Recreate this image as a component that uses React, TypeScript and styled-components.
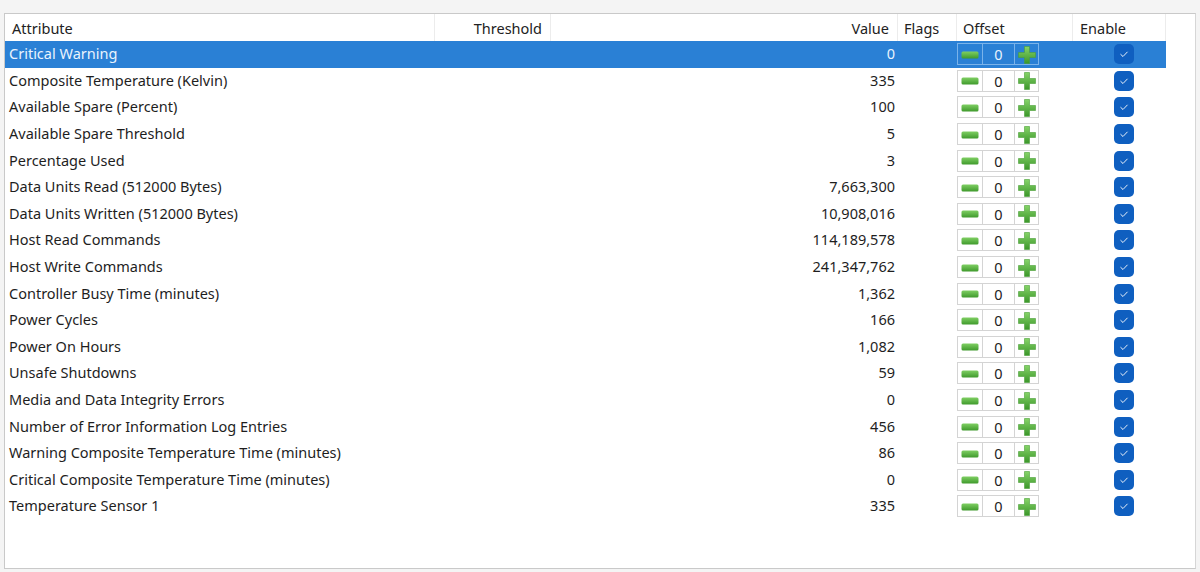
import { createGlobalStyle } from "styled-components";
import styled from "styled-components";

const rows: [string, string][] = [
  ["Critical Warning", "0"],
  ["Composite Temperature (Kelvin)", "335"],
  ["Available Spare (Percent)", "100"],
  ["Available Spare Threshold", "5"],
  ["Percentage Used", "3"],
  ["Data Units Read (512000 Bytes)", "7,663,300"],
  ["Data Units Written (512000 Bytes)", "10,908,016"],
  ["Host Read Commands", "114,189,578"],
  ["Host Write Commands", "241,347,762"],
  ["Controller Busy Time (minutes)", "1,362"],
  ["Power Cycles", "166"],
  ["Power On Hours", "1,082"],
  ["Unsafe Shutdowns", "59"],
  ["Media and Data Integrity Errors", "0"],
  ["Number of Error Information Log Entries", "456"],
  ["Warning Composite Temperature Time (minutes)", "86"],
  ["Critical Composite Temperature Time (minutes)", "0"],
  ["Temperature Sensor 1", "335"],
];

const GlobalStyle = createGlobalStyle`
  html, body {
    margin: 0;
    padding: 0;
    background: #f4f4f4;
    font-family: "Segoe UI", "Noto Sans", "Open Sans", sans-serif;
  }
`;

const Page = styled.div`
  padding: 13px 4px 3px 4px;
  height: 572px;
  box-sizing: border-box;
`;

const Panel = styled.div`
  height: 100%;
  box-sizing: border-box;
  background: #ffffff;
  border: 1px solid #c9c9c9;
  border-right-color: #d6d6d6;
`;

const Grid = styled.div`
  display: grid;
  grid-template-columns: 430px 116px 347px 59px 116px 93px;
  grid-template-rows: 27px;
  grid-auto-rows: 26.6px;
  width: 1161px;
  color: #1e1e1e;
  font-size: 14.5px;
`;

const HeadCell = styled.div<{ $align?: "left" | "right"; $pad?: number }>`
  display: flex;
  align-items: center;
  justify-content: ${({ $align }) => ($align === "right" ? "flex-end" : "flex-start")};
  padding: 0 ${({ $align, $pad }) => ($align === "right" ? `${$pad ?? 8}px` : "0")} 0
    ${({ $align, $pad }) => ($align === "right" ? "0" : `${$pad ?? 7}px`)};
  border-right: 1px solid #ececec;
  box-sizing: border-box;
  color: #222;
  white-space: nowrap;
`;

const Row = styled.div<{ $selected?: boolean }>`
  display: contents;
  color: ${({ $selected }) => ($selected ? "#e9f3fd" : "#1e1e1e")};

  & > div {
    background: ${({ $selected }) => ($selected ? "#2a80d5" : "transparent")};
  }
`;

const Cell = styled.div<{ $align?: "left" | "right" }>`
  display: flex;
  align-items: center;
  justify-content: ${({ $align }) => ($align === "right" ? "flex-end" : "flex-start")};
  padding: ${({ $align }) => ($align === "right" ? "0 3px 2px 0" : "0 0 2px 4px")};
  box-sizing: border-box;
  white-space: nowrap;
`;

const OffsetCell = styled.div`
  display: flex;
  align-items: center;
  padding-left: 0;
`;

const Spinner = styled.div<{ $selected?: boolean }>`
  display: grid;
  grid-template-columns: 24px 32px 24px;
  height: 22px;
  border: 1px solid ${({ $selected }) => ($selected ? "#7ab3ea" : "#d4d4d4")};
  box-sizing: border-box;

  & > * + * {
    border-left: 1px solid ${({ $selected }) => ($selected ? "#7ab3ea" : "#d4d4d4")};
  }
`;

const SpinBtn = styled.div`
  display: flex;
  align-items: center;
  justify-content: center;
`;

const SpinValue = styled.div<{ $selected?: boolean }>`
  display: flex;
  align-items: center;
  justify-content: center;
  padding-bottom: 1px;
  font-size: 14.5px;
  color: ${({ $selected }) => ($selected ? "#e9f3fd" : "#222")};
`;

const EnableCell = styled.div`
  display: flex;
  align-items: center;
  padding-left: 41px;
`;

const Check = styled.div`
  width: 20px;
  height: 20px;
  border-radius: 5px;
  background: #0f5fc0;
  display: flex;
  align-items: center;
  justify-content: center;
`;

function Minus() {
  return (
    <svg width="18" height="8" viewBox="0 0 18 8">
      <defs>
        <linearGradient id="mg" x1="0" y1="0" x2="0" y2="1">
          <stop offset="0" stopColor="#7fcf63" />
          <stop offset="1" stopColor="#3f9a2c" />
        </linearGradient>
      </defs>
      <rect x="0.5" y="0.5" width="17" height="7" rx="1.5" fill="url(#mg)" />
    </svg>
  );
}

function Plus() {
  return (
    <svg width="18" height="18" viewBox="0 0 18 18">
      <defs>
        <linearGradient id="pg" x1="0" y1="0" x2="0" y2="1">
          <stop offset="0" stopColor="#86d468" />
          <stop offset="1" stopColor="#3b962a" />
        </linearGradient>
      </defs>
      <path
        d="M6.5 0.5h5v6h6v5h-6v6h-5v-6h-6v-5h6z"
        fill="url(#pg)"
        stroke="#4a9f37"
        strokeWidth="0.6"
        strokeLinejoin="round"
      />
    </svg>
  );
}

function CheckMark() {
  return (
    <svg width="12" height="10" viewBox="0 0 12 10">
      <path d="M2.5 5.2 L5 7.5 L9.5 2.8" fill="none" stroke="#ffffff" strokeWidth="0.9" />
    </svg>
  );
}

export default function App() {
  return (
    <>
      <GlobalStyle />
      <Page>
        <Panel>
          <Grid>
            <HeadCell>Attribute</HeadCell>
            <HeadCell $align="right">Threshold</HeadCell>
            <HeadCell $align="right">Value</HeadCell>
            <HeadCell $pad={6}>Flags</HeadCell>
            <HeadCell $pad={6}>Offset</HeadCell>
            <HeadCell $pad={7}>Enable</HeadCell>
            {rows.map(([name, value], i) => {
              const sel = i === 0;
              return (
                <Row key={name} $selected={sel}>
                  <Cell>{name}</Cell>
                  <Cell />
                  <Cell $align="right">{value}</Cell>
                  <Cell />
                  <OffsetCell>
                    <Spinner $selected={sel}>
                      <SpinBtn>
                        <Minus />
                      </SpinBtn>
                      <SpinValue $selected={sel}>0</SpinValue>
                      <SpinBtn>
                        <Plus />
                      </SpinBtn>
                    </Spinner>
                  </OffsetCell>
                  <EnableCell>
                    <Check>
                      <CheckMark />
                    </Check>
                  </EnableCell>
                </Row>
              );
            })}
          </Grid>
        </Panel>
      </Page>
    </>
  );
}
